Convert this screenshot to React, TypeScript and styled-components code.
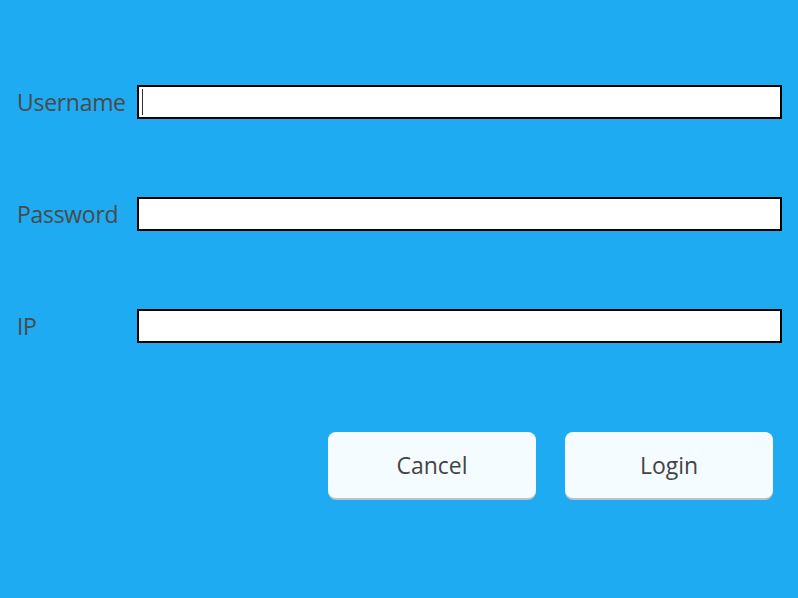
import React from "react";
import styled, { createGlobalStyle } from "styled-components";

const GlobalStyle = createGlobalStyle`
  html, body {
    margin: 0;
    padding: 0;
    background: #1eabf1;
    font-family: "Open Sans", "Noto Sans", "DejaVu Sans", sans-serif;
  }
`;

const Page = styled.div`
  width: 798px;
  height: 598px;
  box-sizing: border-box;
  padding: 85px 16px 0 17px;
  background: #1eabf1;
`;

const Form = styled.div`
  display: grid;
  grid-template-columns: 120px 1fr;
  grid-auto-rows: 34px;
  row-gap: 78px;
  align-items: center;
`;

const Label = styled.label`
  font-size: 23px;
  color: #4a4a4a;
  letter-spacing: -0.3px;
  white-space: nowrap;
`;

const Field = styled.div`
  position: relative;
  height: 34px;
`;

const Caret = styled.span`
  position: absolute;
  left: 5px;
  top: 4px;
  width: 1px;
  height: 26px;
  background: #333;
  pointer-events: none;
`;

const Input = styled.input`
  box-sizing: border-box;
  height: 34px;
  width: 100%;
  margin: 0;
  border: 2px solid #000;
  background: #fff;
  padding: 0 4px;
  font-size: 18px;
  font-family: inherit;
  outline: none;
  caret-color: transparent;
`;

const Actions = styled.div`
  display: flex;
  justify-content: flex-end;
  gap: 29px;
  margin-top: 89px;
  padding-right: 9px;
`;

const Button = styled.button`
  width: 208px;
  height: 66px;
  border: none;
  border-radius: 8px;
  background: #f5fcff;
  box-shadow: 0 2px 0 #b9c2c6;
  color: #444;
  font-size: 23px;
  font-family: inherit;
  cursor: pointer;
`;

export default function App() {
  return (
    <>
      <GlobalStyle />
      <Page>
        <Form>
          <Label htmlFor="username">Username</Label>
          <Field>
            <Input id="username" type="text" />
            <Caret />
          </Field>
          <Label htmlFor="password">Password</Label>
          <Field>
            <Input id="password" type="password" />
          </Field>
          <Label htmlFor="ip">IP</Label>
          <Field>
            <Input id="ip" type="text" />
          </Field>
        </Form>
        <Actions>
          <Button>Cancel</Button>
          <Button>Login</Button>
        </Actions>
      </Page>
    </>
  );
}
